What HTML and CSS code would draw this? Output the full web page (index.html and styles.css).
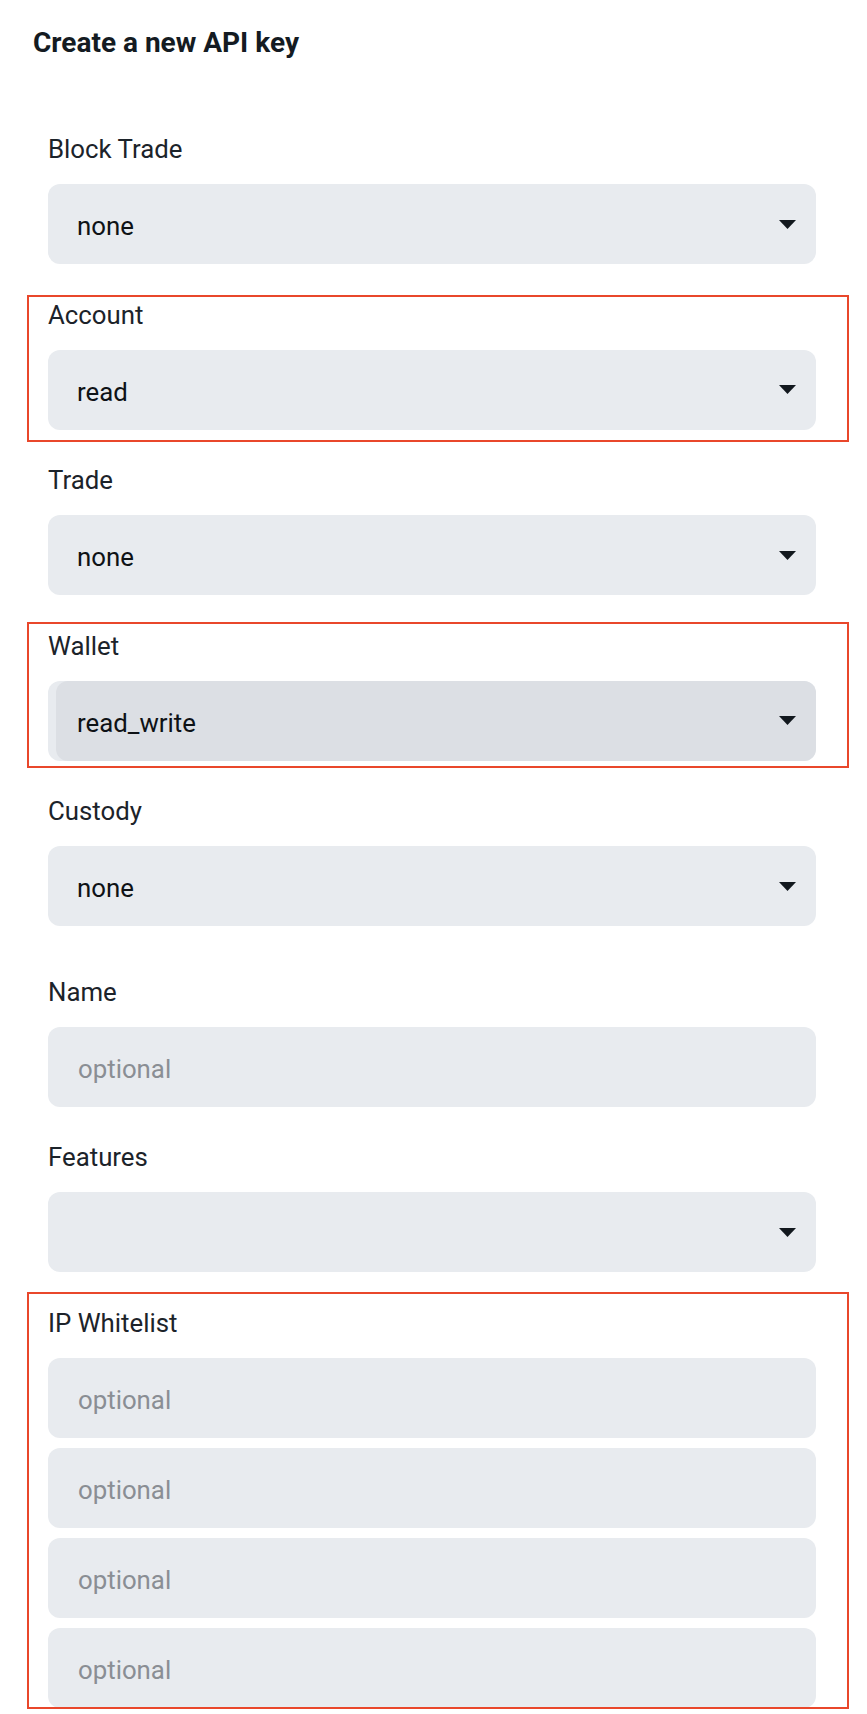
FILE: index.html
```html
<!DOCTYPE html>
<html lang="en">
<head>
<meta charset="utf-8">
<title>Create a new API key</title>
<link rel="stylesheet" href="styles.css">
</head>
<body>
<div class="page">
  <h1 class="title">Create a new API key</h1>
  <form class="form">
    <div class="field">
      <label class="label">Block Trade</label>
      <div class="select"><span class="value">none</span><svg class="caret" width="17" height="9" viewBox="0 0 17 9"><path d="M0 0H17L8.5 9Z"/></svg></div>
    </div>
    <div class="field mark mark-account">
      <label class="label">Account</label>
      <div class="select"><span class="value">read</span><svg class="caret" width="17" height="9" viewBox="0 0 17 9"><path d="M0 0H17L8.5 9Z"/></svg></div>
    </div>
    <div class="field">
      <label class="label">Trade</label>
      <div class="select"><span class="value">none</span><svg class="caret" width="17" height="9" viewBox="0 0 17 9"><path d="M0 0H17L8.5 9Z"/></svg></div>
    </div>
    <div class="field mark mark-wallet">
      <label class="label">Wallet</label>
      <div class="select select-hover"><div class="hover-layer"><span class="value">read_write</span><svg class="caret" width="17" height="9" viewBox="0 0 17 9"><path d="M0 0H17L8.5 9Z"/></svg></div></div>
    </div>
    <div class="field">
      <label class="label">Custody</label>
      <div class="select"><span class="value">none</span><svg class="caret" width="17" height="9" viewBox="0 0 17 9"><path d="M0 0H17L8.5 9Z"/></svg></div>
    </div>
    <div class="field field-spaced">
      <label class="label">Name</label>
      <input class="input" type="text" placeholder="optional">
    </div>
    <div class="field">
      <label class="label">Features</label>
      <div class="select"><span class="value"></span><svg class="caret" width="17" height="9" viewBox="0 0 17 9"><path d="M0 0H17L8.5 9Z"/></svg></div>
    </div>
    <div class="field mark mark-ip">
      <label class="label">IP Whitelist</label>
      <div class="stack">
        <input class="input" type="text" placeholder="optional">
        <input class="input" type="text" placeholder="optional">
        <input class="input" type="text" placeholder="optional">
        <input class="input" type="text" placeholder="optional">
      </div>
    </div>
  </form>
</div>
</body>
</html>
```

FILE: styles.css
```css
* { box-sizing: border-box; }

html, body {
  margin: 0;
  padding: 0;
  background: #ffffff;
}

body {
  font-family: Roboto, "Noto Sans", Arial, sans-serif;
  color: #12181e;
}

.page {
  width: 867px;
  height: 1714px;
  overflow: hidden;
  padding: 26px 51px 0 33px;
}

.title {
  margin: 0;
  font-size: 28px;
  line-height: 34px;
  font-weight: 700;
  color: #141b22;
}

.form {
  margin-top: 74px;
  padding-left: 15px;
  display: flex;
  flex-direction: column;
}

.field {
  position: relative;
  display: flex;
  flex-direction: column;
  gap: 20px;
  margin-bottom: 35.5px;
}

.field-spaced {
  margin-top: 15px;
}

.label {
  font-size: 25.8px;
  line-height: 30px;
  color: #1c232a;
}

.select {
  height: 80px;
  border-radius: 12px;
  background: #e8ebef;
  display: flex;
  align-items: center;
  justify-content: space-between;
  padding: 4px 20px 0 29px;
  font-size: 25.8px;
  color: #0e1216;
}

.select-hover {
  padding: 0 0 0 8px;
  align-items: stretch;
}

.hover-layer {
  flex: 1;
  display: flex;
  align-items: center;
  justify-content: space-between;
  background: #dcdfe4;
  border-radius: 12px;
  padding: 4px 20px 0 21px;
}

.caret {
  display: block;
  fill: #12181e;
  margin-top: -4px;
}

.input {
  display: block;
  width: 100%;
  height: 80px;
  border: 0;
  outline: 0;
  border-radius: 12px;
  background: #e8ebef;
  padding: 4px 20px 0 30px;
  font-family: Roboto, "Noto Sans", Arial, sans-serif;
  font-size: 25.8px;
  color: #0e1216;
}

.input::placeholder {
  color: #8a8e94;
}

.stack {
  display: flex;
  flex-direction: column;
  gap: 10px;
}

/* red annotation frames laid over the fields */
.mark::after {
  content: "";
  position: absolute;
  left: -21px;
  right: -33px;
  border: 2px solid #e9472b;
  pointer-events: none;
}

.mark-account::after {
  top: -5px;
  bottom: -12px;
}

.mark-wallet::after {
  top: -9px;
  bottom: -7px;
}

.mark-ip::after {
  top: -16px;
  bottom: -1px;
}
```
